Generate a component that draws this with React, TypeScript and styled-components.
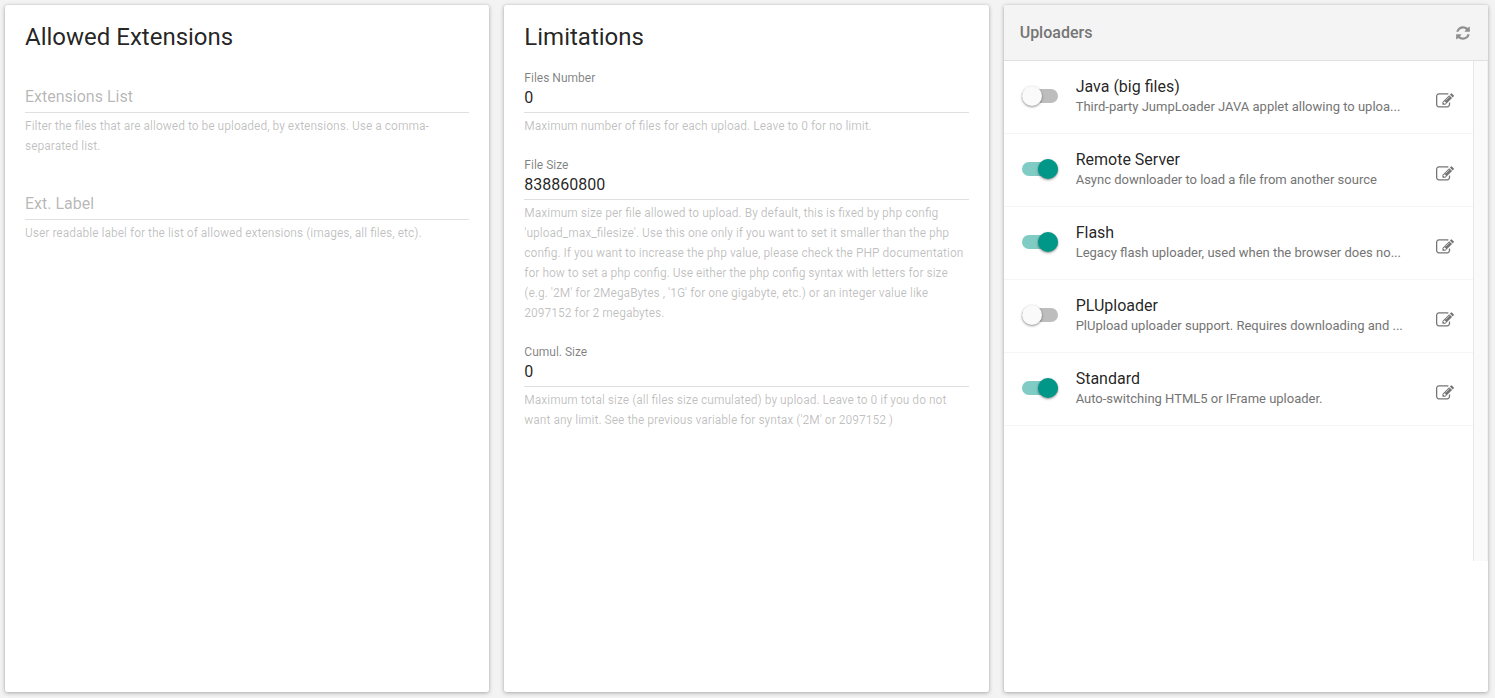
import React, { useState } from "react";
import styled, { createGlobalStyle } from "styled-components";

const GlobalStyle = createGlobalStyle`
  *, *::before, *::after { box-sizing: border-box; }
  body {
    margin: 0;
    background: #f3f3f3;
    color: rgba(0, 0, 0, 0.87);
    font-family: Roboto, "Liberation Sans", sans-serif;
    font-size: 16px;
  }
`;

const Page = styled.main`
  display: grid;
  grid-template-columns: repeat(3, minmax(0, 1fr));
  gap: 15px;
  min-height: 100vh;
  padding: 5px 7px 6px 5px;
`;

const Card = styled.section`
  background: #fff;
  border-radius: 2px;
  box-shadow: 0 1px 4px rgba(0, 0, 0, 0.3), 0 0 1px rgba(0, 0, 0, 0.2);
`;

const FormCard = styled(Card)`
  display: flex;
  flex-direction: column;
  gap: 18px;
  padding: 20px;
`;

const CardTitle = styled.h2`
  margin: 0;
  font-size: 24px;
  font-weight: 400;
  line-height: 24px;
`;

const FieldBox = styled.div<{ $resting: boolean }>`
  display: flex;
  flex-direction: column;
  padding-top: ${(p) => (p.$resting ? "20px" : "0")};
`;

const FieldLabel = styled.label`
  padding-top: 2px;
  font-size: 12px;
  line-height: 18px;
  color: rgba(0, 0, 0, 0.5);
`;

const TextInput = styled.input<{ $resting: boolean }>`
  width: 100%;
  height: 26px;
  padding: 0 0 ${(p) => (p.$resting ? "6px" : "5px")};
  border: 0;
  border-bottom: 1px solid #e0e0e0;
  outline: 0;
  background: transparent;
  color: inherit;
  font: inherit;
  &::placeholder { color: rgba(0, 0, 0, 0.3); opacity: 1; }
`;

const Help = styled.p`
  margin: 3px 0 0;
  font-size: 12px;
  line-height: 20px;
  color: rgba(0, 0, 0, 0.25);
`;

const PanelHeader = styled.header`
  display: flex;
  align-items: center;
  justify-content: space-between;
  height: 56px;
  padding: 0 16px;
  border-bottom: 1px solid #e0e0e0;
  border-radius: 2px 2px 0 0;
  background: #f4f4f4;
`;

const PanelTitle = styled.h2`
  margin: 0;
  font-size: 16px;
  font-weight: 500;
  color: #757575;
`;

const IconButton = styled.button<{ $size: number; $color: string }>`
  display: flex;
  align-items: center;
  justify-content: center;
  flex: none;
  width: ${(p) => p.$size}px;
  height: ${(p) => p.$size}px;
  padding: 0;
  border: 0;
  background: none;
  color: ${(p) => p.$color};
  cursor: pointer;
`;

const ScrollArea = styled.div`
  display: flex;
  height: 500px;
`;

const ScrollTrack = styled.div`
  flex: none;
  width: 15px;
  border-left: 1px solid #e8e8e8;
  border-right: 1px solid #f0f0f0;
  background: #fafafa;
`;

const List = styled.ul`
  flex: 1;
  min-width: 0;
  margin: 0;
  padding: 0;
  list-style: none;
`;

const Row = styled.li`
  display: flex;
  align-items: flex-start;
  height: 73px;
  padding: 16px 4px 0 18px;
  border-bottom: 1px solid #f5f5f5;
`;

const Switch = styled.input`
  appearance: none;
  display: flex;
  align-items: center;
  flex: none;
  width: 36px;
  height: 14px;
  margin: 12px 18px 0 0;
  border-radius: 7px;
  background: #bdbdbd;
  cursor: pointer;

  &::before {
    content: "";
    width: 20px;
    height: 20px;
    flex: none;
    border-radius: 50%;
    background: #fafafa;
    box-shadow: 0 1px 3px rgba(0, 0, 0, 0.24), 0 1px 2px rgba(0, 0, 0, 0.24);
  }
  &:checked { justify-content: flex-end; background: #80cbc4; }
  &:checked::before { background: #009688; }
`;

const RowText = styled.div`
  flex: 1;
  min-width: 0;
  white-space: nowrap;
`;

const RowName = styled.label`
  display: block;
  line-height: 20px;
`;

const RowDetail = styled.p`
  margin: 0;
  font-size: 13px;
  line-height: 20px;
  color: #757575;
`;

const RefreshIcon = () => (
  <svg width="16" height="16" viewBox="0 0 1792 1792" fill="currentColor" aria-hidden="true">
    <path d="M1639 1056q0 5-1 7-64 268-268 434.500t-478 166.500q-146 0-282.500-55t-243.500-157l-129 129q-19 19-45 19t-45-19-19-45v-448q0-26 19-45t45-19h448q26 0 45 19t19 45-19 45l-137 137q71 66 161 102t187 36q134 0 250-65t186-179q11-17 53-117 8-23 30-23h192q13 0 22.500 9.500t9.500 22.500zm25-800v448q0 26-19 45t-45 19h-448q-26 0-45-19t-19-45 19-45l138-138q-148-137-349-137-134 0-250 65t-186 179q-11 17-53 117-8 23-30 23h-199q-13 0-22.500-9.500t-9.500-22.500v-7q65-268 270-434.500t480-166.500q146 0 284 55.500t245 156.500l130-129q19-19 45-19t45 19 19 45z" />
  </svg>
);

const EditIcon = () => (
  <svg width="18" height="18" viewBox="0 0 1792 1792" fill="currentColor" aria-hidden="true">
    <path d="M888 1184l116-116-152-152-116 116v56h96v96h56zm440-720q-16-16-33 1l-350 350q-17 17-1 33t33-1l350-350q17-17 1-33zm80 594v190q0 119-84.500 203.500t-203.500 84.500h-832q-119 0-203.500-84.500t-84.500-203.500v-832q0-119 84.500-203.500t203.500-84.500h832q63 0 117 25 15 7 18 23 3 17-9 29l-49 49q-14 14-32 8-23-6-45-6h-832q-66 0-113 47t-47 113v832q0 66 47 113t113 47h832q66 0 113-47t47-113v-126q0-13 9-22l64-64q15-15 35-7t20 29zm-96-738l288 288-672 672h-288v-288zm444 132l-92 92-288-288 92-92q28-28 68-28t68 28l152 152q28 28 28 68t-28 68z" />
  </svg>
);

interface FieldProps {
  id: string;
  label: string;
  initial?: string;
  help: string;
}

function Field({ id, label, initial = "", help }: FieldProps) {
  const [value, setValue] = useState(initial);
  const resting = value === "";
  return (
    <FieldBox $resting={resting}>
      {!resting && <FieldLabel htmlFor={id}>{label}</FieldLabel>}
      <TextInput
        $resting={resting}
        id={id}
        type="text"
        value={value}
        placeholder={label}
        aria-label={label}
        aria-describedby={`${id}-help`}
        onChange={(e) => setValue(e.target.value)}
      />
      <Help id={`${id}-help`}>{help}</Help>
    </FieldBox>
  );
}

const uploaders = [
  { id: "java", name: "Java (big files)", detail: "Third-party JumpLoader JAVA applet allowing to uploa...", on: false },
  { id: "remote", name: "Remote Server", detail: "Async downloader to load a file from another source", on: true },
  { id: "flash", name: "Flash", detail: "Legacy flash uploader, used when the browser does no...", on: true },
  { id: "plupload", name: "PLUploader", detail: "PlUpload uploader support. Requires downloading and ...", on: false },
  { id: "standard", name: "Standard", detail: "Auto-switching HTML5 or IFrame uploader.", on: true },
];

export default function App() {
  return (
    <>
      <GlobalStyle />
      <Page>
        <FormCard>
          <CardTitle>Allowed Extensions</CardTitle>
          <Field
            id="extensions"
            label="Extensions List"
            help="Filter the files that are allowed to be uploaded, by extensions. Use a comma-separated list."
          />
          <Field
            id="ext-label"
            label="Ext. Label"
            help="User readable label for the list of allowed extensions (images, all files, etc)."
          />
        </FormCard>

        <FormCard>
          <CardTitle>Limitations</CardTitle>
          <Field
            id="files-number"
            label="Files Number"
            initial="0"
            help="Maximum number of files for each upload. Leave to 0 for no limit."
          />
          <Field
            id="file-size"
            label="File Size"
            initial="838860800"
            help="Maximum size per file allowed to upload. By default, this is fixed by php config 'upload_max_filesize'. Use this one only if you want to set it smaller than the php config. If you want to increase the php value, please check the PHP documentation for how to set a php config. Use either the php config syntax with letters for size (e.g. '2M' for 2MegaBytes , '1G' for one gigabyte, etc.) or an integer value like 2097152 for 2 megabytes."
          />
          <Field
            id="cumul-size"
            label="Cumul. Size"
            initial="0"
            help="Maximum total size (all files size cumulated) by upload. Leave to 0 if you do not want any limit. See the previous variable for syntax ('2M' or 2097152 )"
          />
        </FormCard>

        <Card>
          <PanelHeader>
            <PanelTitle>Uploaders</PanelTitle>
            <IconButton $size={18} $color="#8f8f8f" type="button" aria-label="Refresh">
              <RefreshIcon />
            </IconButton>
          </PanelHeader>
          <ScrollArea>
            <List>
              {uploaders.map((u) => (
                <Row key={u.id}>
                  <Switch type="checkbox" role="switch" id={u.id} defaultChecked={u.on} />
                  <RowText>
                    <RowName htmlFor={u.id}>{u.name}</RowName>
                    <RowDetail>{u.detail}</RowDetail>
                  </RowText>
                  <IconButton $size={48} $color="#757575" type="button" aria-label={`Edit ${u.name}`}>
                    <EditIcon />
                  </IconButton>
                </Row>
              ))}
            </List>
            <ScrollTrack />
          </ScrollArea>
        </Card>
      </Page>
    </>
  );
}
